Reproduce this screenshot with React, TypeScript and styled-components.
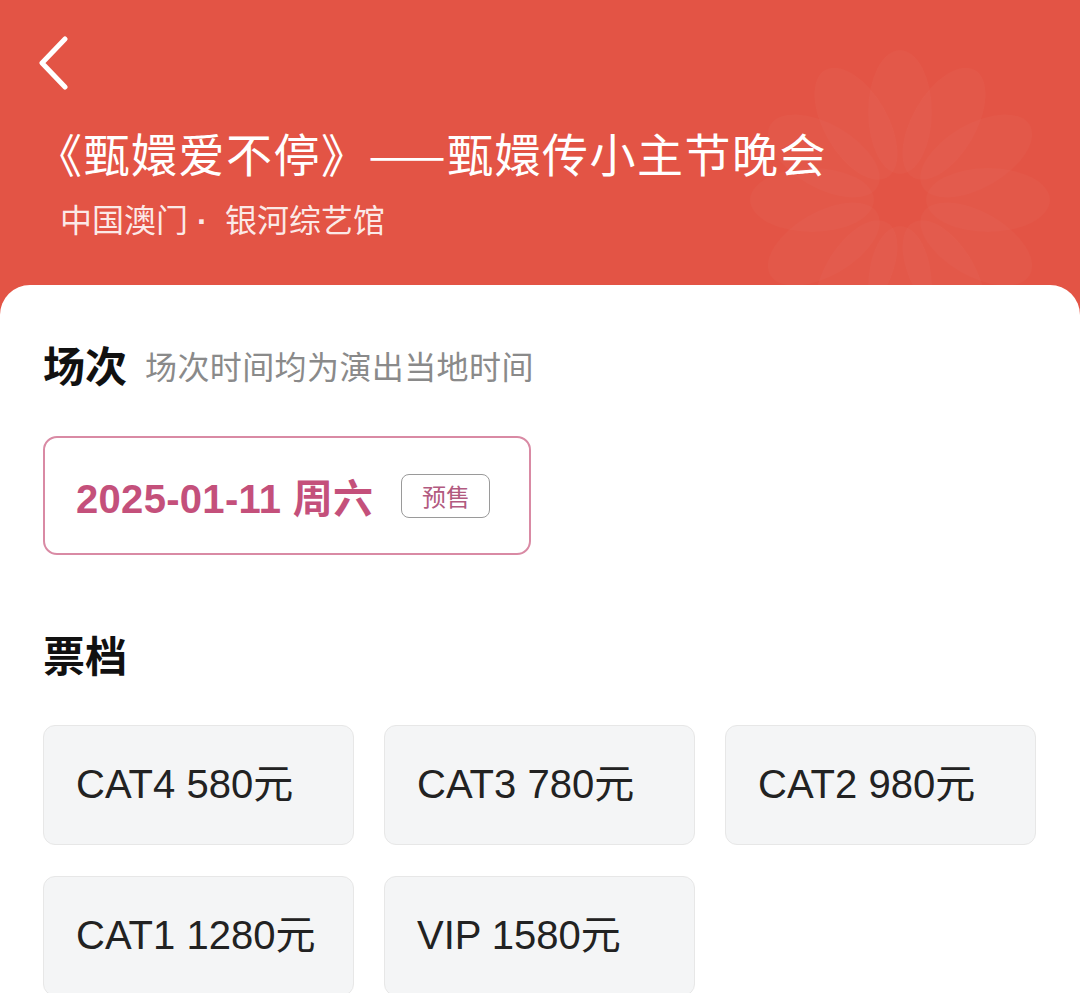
import React from "react";
import styled, { createGlobalStyle } from "styled-components";

const GlobalStyle = createGlobalStyle`
  html, body {
    margin: 0;
    padding: 0;
    background: #e35445;
  }
  body {
    font-family: "Liberation Sans", "Noto Sans CJK SC", sans-serif;
  }
`;

const Page = styled.div`
  width: 1080px;
  min-height: 993px;
  background: #e35445;
  display: flex;
  flex-direction: column;
`;

const Header = styled.header`
  position: relative;
  height: 285px;
  padding: 36px 0 0 60px;
  box-sizing: border-box;
  overflow: hidden;
  color: #fff;
`;

const BackButton = styled.button`
  display: block;
  margin-left: -22px;
  padding: 0;
  border: 0;
  background: none;
  width: 32px;
  height: 56px;
  cursor: pointer;
`;

const Title = styled.h1`
  position: relative;
  margin: 35px 0 0 -24px;
  font-family: "Noto Sans CJK SC", sans-serif;
  font-size: 46px;
  line-height: 50px;
  font-weight: 400;
  letter-spacing: 1.5px;
`;

const Venue = styled.div`
  position: relative;
  margin-top: 22px;
  font-family: "Noto Sans CJK SC", sans-serif;
  font-size: 32px;
  line-height: 38px;
  color: rgba(255, 255, 255, 0.88);
`;

const Dot = styled.span`
  display: inline-block;
  width: 37px;
  padding-left: 9px;
  box-sizing: border-box;
  font-family: "Liberation Sans", sans-serif;
  font-weight: 700;
`;

const Flower = styled.svg`
  position: absolute;
  right: 20px;
  top: 30px;
  pointer-events: none;
`;

const Sheet = styled.main`
  flex: 1;
  background: #fff;
  border-radius: 30px 30px 0 0;
  padding: 58px 43px 0;
`;

const SectionHead = styled.div<{ $gap?: number }>`
  display: flex;
  align-items: center;
  gap: 18px;
  height: 42px;
  margin-top: ${(p) => p.$gap ?? 0}px;
`;

const SectionTitle = styled.h2`
  margin: 0;
  font-family: "Noto Sans CJK SC", sans-serif;
  font-size: 42px;
  line-height: 42px;
  font-weight: 700;
  color: #111;
`;

const SectionHint = styled.span`
  font-family: "Noto Sans CJK SC", sans-serif;
  font-size: 32px;
  color: #8a8a8a;
  padding-top: 2px;
  letter-spacing: 0.4px;
`;

const SessionCard = styled.div`
  margin-top: 51px;
  width: 488px;
  height: 119px;
  box-sizing: border-box;
  border: 2px solid #d98aa4;
  border-radius: 14px;
  display: flex;
  align-items: center;
  padding-left: 31px;
  gap: 28px;
`;

const SessionDate = styled.span`
  font-size: 40px;
  font-weight: 700;
  color: #c4507b;
  letter-spacing: 0.3px;
`;

const PresaleTag = styled.span`
  width: 89px;
  height: 44px;
  box-sizing: border-box;
  border: 1.5px solid #9a9a9a;
  border-radius: 8px;
  display: flex;
  align-items: center;
  justify-content: center;
  font-family: "Noto Sans CJK SC", sans-serif;
  font-size: 24px;
  color: #b25a80;
`;

const TicketGrid = styled.div`
  margin-top: 50px;
  display: grid;
  grid-template-columns: repeat(3, 311px);
  grid-auto-rows: 120px;
  column-gap: 30px;
  row-gap: 31px;
`;

const TicketCard = styled.div`
  box-sizing: border-box;
  background: #f4f5f6;
  border: 1px solid #e7e7e7;
  border-radius: 12px;
  display: flex;
  align-items: center;
  padding: 0 0 8px 32px;
  font-size: 40px;
  color: #222;
`;

const tickets = [
  "CAT4 580元",
  "CAT3 780元",
  "CAT2 980元",
  "CAT1 1280元",
  "VIP 1580元",
];

const petals = Array.from({ length: 12 }, (_, i) => i * 30);

export default function App() {
  return (
    <Page>
      <GlobalStyle />
      <Header>
        <Flower width="320" height="300" viewBox="0 0 320 300">
          <g transform="translate(160 170)" fill="#ffffff" fillOpacity="0.025">
            {petals.map((a) => (
              <ellipse key={a} cx="0" cy="-88" rx="32" ry="62" transform={`rotate(${a})`} />
            ))}
          </g>
        </Flower>
        <BackButton aria-label="返回">
          <svg width="32" height="56" viewBox="0 0 32 56">
            <path
              d="M27 3 L4 27 L27 51"
              fill="none"
              stroke="#fff"
              strokeWidth="5"
              strokeLinecap="round"
              strokeLinejoin="round"
            />
          </svg>
        </BackButton>
        <Title>《甄嬛爱不停》——甄嬛传小主节晚会</Title>
        <Venue>
          中国澳门<Dot>·</Dot>银河综艺馆
        </Venue>
      </Header>
      <Sheet>
        <SectionHead>
          <SectionTitle>场次</SectionTitle>
          <SectionHint>场次时间均为演出当地时间</SectionHint>
        </SectionHead>
        <SessionCard>
          <SessionDate>2025-01-11 周六</SessionDate>
          <PresaleTag>预售</PresaleTag>
        </SessionCard>
        <SectionHead $gap={78}>
          <SectionTitle>票档</SectionTitle>
        </SectionHead>
        <TicketGrid>
          {tickets.map((t) => (
            <TicketCard key={t}>{t}</TicketCard>
          ))}
        </TicketGrid>
      </Sheet>
    </Page>
  );
}
